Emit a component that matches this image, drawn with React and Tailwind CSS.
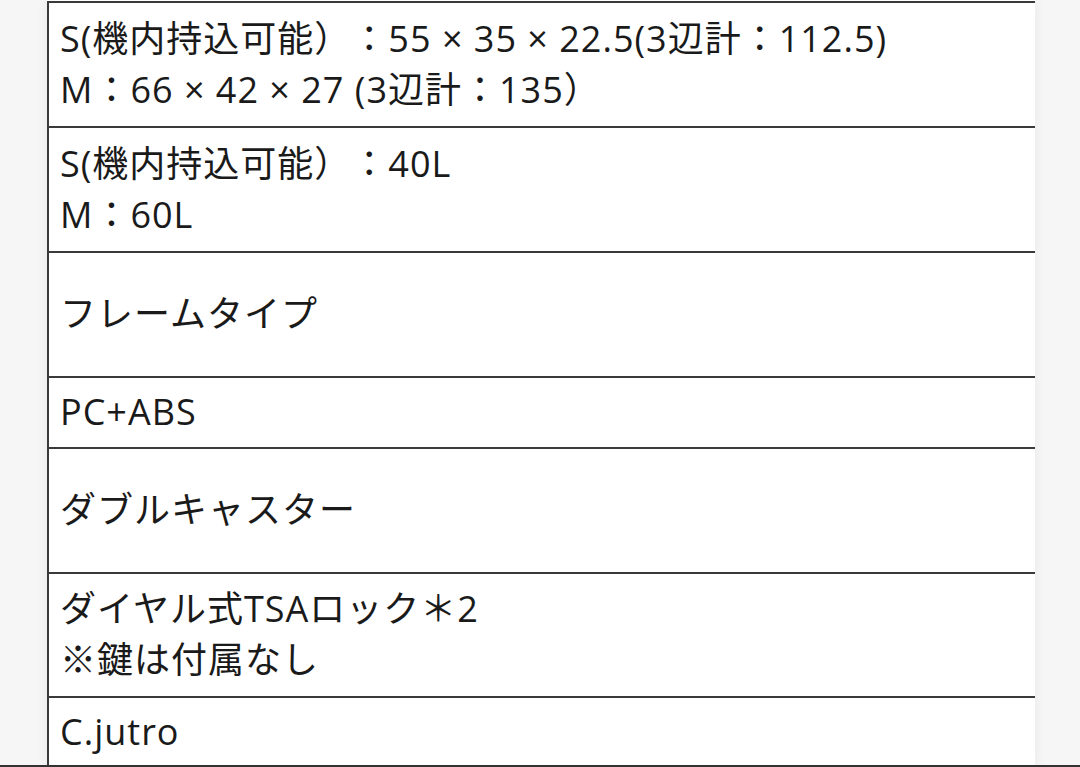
const rows = [
  { h: 'h-[125px]', lines: ['S(機内持込可能）：55 × 35 × 22.5(3辺計：112.5)', 'M：66 × 42 × 27 (3辺計：135）'] },
  { h: 'h-[125px]', lines: ['S(機内持込可能）：40L', 'M：60L'] },
  { h: 'h-[125px]', lines: ['フレームタイプ'] },
  { h: 'h-[71px]', lines: ['PC+ABS'] },
  { h: 'h-[125px]', lines: ['ダブルキャスター'] },
  { h: 'h-[124px]', lines: ['ダイヤル式TSAロック＊2', '※鍵は付属なし'] },
  { h: 'h-[69px]', lines: ['C.jutro'] },
];

export default function App() {
  return (
    <div
      className="h-[767px] overflow-hidden bg-[#f6f6f6] border-b-2 border-[#333]"
      style={{ fontFamily: '"Open Sans", "Noto Sans CJK JP", sans-serif' }}
    >
      <div className="ml-[47px] w-[988px] pt-px bg-white shadow-[0_0_12px_rgba(0,0,0,0.06)]">
        <div className="border-l-2 border-t-2 border-[#3a3a3a]">
          {rows.map((row, i) => (
            <div
              key={i}
              className={`${row.h} flex flex-col justify-center pl-[11px] pb-[2px] text-[36px] leading-[51px] tracking-[1px] text-[#1a1a1a] [text-spacing-trim:space-all] ${i < rows.length - 1 ? 'border-b-2 border-[#3a3a3a]' : ''}`}
            >
              {row.lines.map((line, j) => (
                <div key={j} className="whitespace-nowrap">{line}</div>
              ))}
            </div>
          ))}
        </div>
      </div>
    </div>
  );
}
